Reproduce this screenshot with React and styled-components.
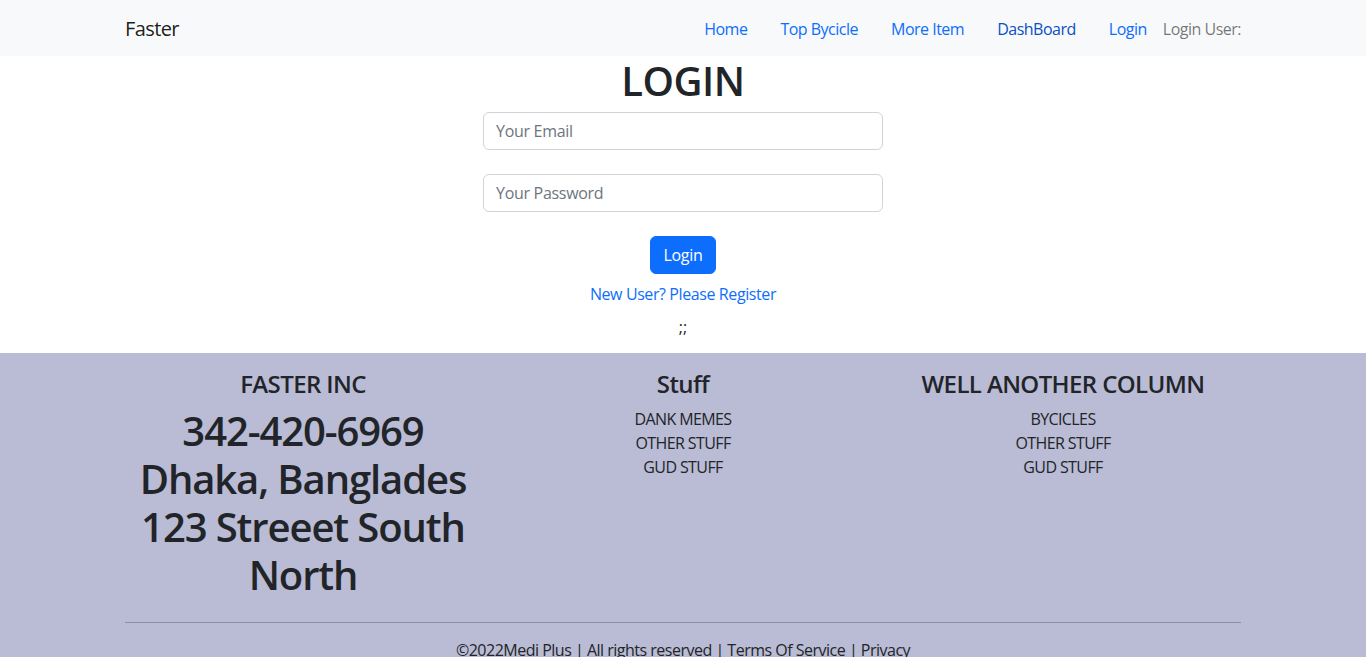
import styled, { createGlobalStyle } from "styled-components";

const GlobalStyle = createGlobalStyle`
  * { box-sizing: border-box; }
  body {
    margin: 0;
    font-family: "Open Sans", "Noto Sans", sans-serif;
    font-size: 16px;
    line-height: 1.5;
    color: #212529;
    background: #fff;
  }
`;

const Container = styled.div`
  width: 1140px;
  margin: 0 auto;
  padding: 0 12px;
`;

const NavBar = styled.nav`
  background: #f8f9fa;
  height: 56px;
  > div {
    height: 100%;
    padding-top: 2px;
    display: flex;
    align-items: center;
    justify-content: space-between;
  }
`;

const Brand = styled.a`
  font-size: 20px;
  color: rgba(0, 0, 0, 0.9);
  text-decoration: none;
  letter-spacing: -0.6px;
`;

const NavList = styled.div`
  display: flex;
  align-items: center;
  gap: 33px;
`;

const NavLink = styled.a`
  color: ${(p) => (p.$active ? "#0a4fc4" : "#0d6efd")};
  text-decoration: none;
  letter-spacing: -0.5px;
  margin-right: ${(p) => (p.$tight ? "-17px" : "0")};
`;

const NavText = styled.span`
  color: rgba(0, 0, 0, 0.55);
  letter-spacing: -0.5px;
`;

const LoginSection = styled.section`
  display: flex;
  flex-direction: column;
  align-items: center;
  padding-bottom: 14px;
`;

const Title = styled.h1`
  margin: 0 0 8px;
  padding-top: 1px;
  height: 48px;
  font-size: 40px;
  line-height: 1.2;
  font-weight: 600;
  letter-spacing: -0.5px;
`;

const Form = styled.form`
  width: 400px;
  display: flex;
  flex-direction: column;
  align-items: center;
  gap: 24px;
`;

const Input = styled.input`
  width: 100%;
  height: 38px;
  padding: 6px 12px;
  font: inherit;
  font-size: 16px;
  letter-spacing: -0.3px;
  color: #212529;
  border: 1px solid #ced4da;
  border-radius: 6px;
  outline: none;
  &::placeholder { color: #6c757d; }
`;

const Button = styled.button`
  height: 38px;
  padding: 0 12px;
  font: inherit;
  font-size: 16px;
  letter-spacing: -0.3px;
  color: #fff;
  background: #0d6efd;
  border: 1px solid #0d6efd;
  border-radius: 6px;
`;

const RegisterLink = styled.a`
  margin-top: 8px;
  color: #0d6efd;
  text-decoration: none;
  letter-spacing: -0.4px;
`;

const Dots = styled.p`
  margin: 9px 0 0;
  line-height: 24px;
`;

const Footer = styled.footer`
  background: #babbd4;
  padding-top: 17px;
  text-align: center;
`;

const Row = styled.div`
  display: grid;
  grid-template-columns: repeat(3, 1fr);
  margin: 0 -12px;
  > div { padding: 0 12px; }
`;

const ColTitle = styled.h4`
  margin: 0 0 8px;
  font-size: 24px;
  line-height: 1.2;
  font-weight: 600;
  letter-spacing: -0.6px;
`;

const BigText = styled.h1`
  margin: 0;
  font-size: 40px;
  line-height: 48px;
  font-weight: 600;
  letter-spacing: -1.1px;
  white-space: nowrap;
`;

const LinkList = styled.ul`
  list-style: none;
  margin: 0;
  padding: 0;
  li {
    line-height: 24px;
    letter-spacing: -0.6px;
    color: #212529;
  }
`;

const Rule = styled.hr`
  margin: 23px 0 15px;
  border: 0;
  border-top: 1px solid #8e909f;
`;

const Copy = styled.p`
  margin: 0;
  letter-spacing: -0.5px;
`;

export default function App() {
  return (
    <>
      <GlobalStyle />
      <NavBar>
        <Container>
          <Brand href="#">Faster</Brand>
          <NavList>
            <NavLink href="#">Home</NavLink>
            <NavLink href="#">Top Bycicle</NavLink>
            <NavLink href="#">More Item</NavLink>
            <NavLink href="#" $active>DashBoard</NavLink>
            <NavLink href="#" $tight>Login</NavLink>
            <NavText>Login User:</NavText>
          </NavList>
        </Container>
      </NavBar>

      <LoginSection>
        <Title>LOGIN</Title>
        <Form onSubmit={(e) => e.preventDefault()}>
          <Input type="email" placeholder="Your Email" />
          <Input type="password" placeholder="Your Password" />
          <Button type="submit">Login</Button>
        </Form>
        <RegisterLink href="#">New User? Please Register</RegisterLink>
        <Dots>;;</Dots>
      </LoginSection>

      <Footer>
        <Container>
          <Row>
            <div>
              <ColTitle>FASTER INC</ColTitle>
              <BigText>
                342-420-6969<br />
                Dhaka, Banglades<br />
                123 Streeet South<br />
                North
              </BigText>
            </div>
            <div>
              <ColTitle>Stuff</ColTitle>
              <LinkList>
                <li>DANK MEMES</li>
                <li>OTHER STUFF</li>
                <li>GUD STUFF</li>
              </LinkList>
            </div>
            <div>
              <ColTitle>WELL ANOTHER COLUMN</ColTitle>
              <LinkList>
                <li>BYCICLES</li>
                <li>OTHER STUFF</li>
                <li>GUD STUFF</li>
              </LinkList>
            </div>
          </Row>
          <Rule />
          <Copy>©2022Medi Plus | All rights reserved | Terms Of Service | Privacy</Copy>
        </Container>
      </Footer>
    </>
  );
}
